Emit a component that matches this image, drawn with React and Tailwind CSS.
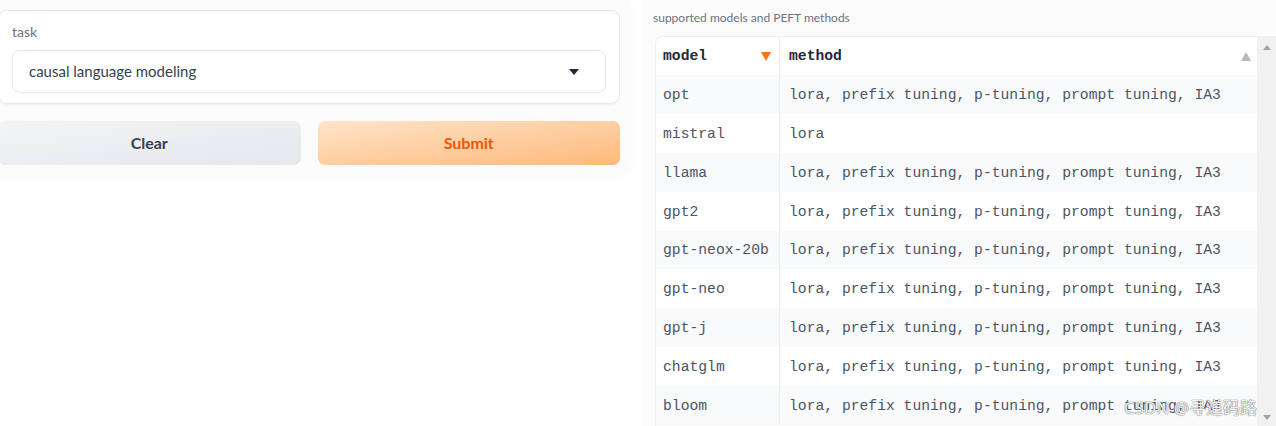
import { useState } from "react"

const rows = [
    ["opt", "lora, prefix tuning, p-tuning, prompt tuning, IA3"],
    ["mistral", "lora"],
    ["llama", "lora, prefix tuning, p-tuning, prompt tuning, IA3"],
    ["gpt2", "lora, prefix tuning, p-tuning, prompt tuning, IA3"],
    ["gpt-neox-20b", "lora, prefix tuning, p-tuning, prompt tuning, IA3"],
    ["gpt-neo", "lora, prefix tuning, p-tuning, prompt tuning, IA3"],
    ["gpt-j", "lora, prefix tuning, p-tuning, prompt tuning, IA3"],
    ["chatglm", "lora, prefix tuning, p-tuning, prompt tuning, IA3"],
    ["bloom", "lora, prefix tuning, p-tuning, prompt tuning, IA3"],
]

const App = () => {
    const [task] = useState("causal language modeling")

    return (
        <div className="relative w-[1276px] h-[426px] overflow-hidden bg-white flex items-start font-['Lato',sans-serif]">
            {/* left column: task dropdown + buttons */}
            <div className="w-[632px] -ml-[2px] pt-[10px] pb-[12px] pr-[10px] flex flex-col gap-[17px] bg-[#fbfbfc] rounded-br-[10px] shadow-[0_0_10px_rgba(0,0,0,0.03)]">
                <div className="bg-white border border-[#e7e8eb] rounded-[9px] px-[13px] pt-[11px] pb-[10px] shadow-[0_1px_2px_rgba(0,0,0,0.04)]">
                    <p className="text-[14px] leading-[20px] text-[#6b7280]">task</p>
                    <div className="mt-[8px] h-[43px] border border-[#e7e8eb] rounded-[8px] bg-white flex items-center justify-between pl-[16px] pr-[26px]">
                        <span className="text-[15px] text-[#374151]">{task}</span>
                        <svg width="10" height="6" viewBox="0 0 10 6"><path d="M0 0h10L5 6z" fill="#1f2937" /></svg>
                    </div>
                </div>
                <div className="flex gap-[17px]">
                    <button className="flex-1 h-[44px] rounded-[7px] bg-gradient-to-br from-[#f3f4f6] to-[#e5e7eb] text-[16px] font-bold text-[#374151]">Clear</button>
                    <button className="flex-1 h-[44px] rounded-[7px] bg-gradient-to-br from-[#fee4c8] to-[#fdb97a] text-[16px] font-bold text-[#ea580c]">Submit</button>
                </div>
            </div>

            {/* right column: dataframe */}
            <div className="ml-[13px] self-stretch flex-1 flex flex-col pt-[10px] bg-[#fbfbfc]">
                <p className="pl-[10px] text-[12px] leading-[16px] text-[#6b7280]">supported models and PEFT methods</p>
                <div className="mt-[10px] ml-[12px] flex flex-1 min-h-0">
                    <div className="flex-1 bg-white border-t border-l border-[#eceef1] rounded-tl-[8px] font-['Liberation_Mono',monospace] text-[14.7px] overflow-hidden">
                        <div className="flex h-[38px] items-center bg-white">
                            <div className="w-[124px] h-full flex items-center justify-between pl-[7px] pr-[8px] border-r border-[#eceef1] font-bold text-[#1f2937]">
                                <span>model</span>
                                <svg width="10" height="9" viewBox="0 0 10 9"><path d="M0 0h10L5 9z" fill="#f97316" /></svg>
                            </div>
                            <div className="flex-1 h-full flex items-center justify-between pl-[9px] pr-[6px] font-bold text-[#1f2937]">
                                <span>method</span>
                                <svg width="10" height="9" viewBox="0 0 10 9"><path d="M5 0l5 9H0z" fill="#b6b9be" /></svg>
                            </div>
                        </div>
                        {rows.map(([model, method], i) => (
                            <div key={model} className={`flex h-[38.9px] items-center ${i % 2 === 0 ? "bg-[#f9fafb]" : "bg-white"}`}>
                                <div className="w-[124px] h-full flex items-center pl-[7px] pt-[1px] border-r border-[#eceef1] text-[#4b5563]">{model}</div>
                                <div className="flex-1 h-full flex items-center pl-[9px] pt-[1px] text-[#4b5563]">{method}</div>
                            </div>
                        ))}
                    </div>
                    <div className="w-[19px] bg-[#f1f1f1] flex flex-col items-center justify-between pt-[9px] pb-[6px]">
                        <svg width="8" height="5" viewBox="0 0 8 5"><path d="M4 0l4 5H0z" fill="#a3a3a3" /></svg>
                        <svg width="8" height="5" viewBox="0 0 8 5"><path d="M0 0h8L4 5z" fill="#a3a3a3" /></svg>
                    </div>
                </div>
            </div>

            {/* watermark */}
            <span className="absolute left-[1124px] top-[395px] text-[17px] text-white/90 font-['Noto_Sans','Noto_Sans_CJK_SC',sans-serif] [text-shadow:0_0_1px_#666,0_0_1px_#666]">CSDN @寻道码路</span>
        </div>
    )
}

export default App
